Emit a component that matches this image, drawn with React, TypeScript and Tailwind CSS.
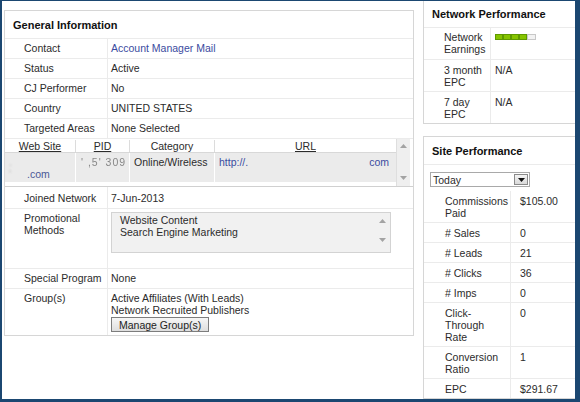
import React from 'react';

const ArrowUp = ({ color = '#a3a3a3' }: { color?: string }) => (
  <svg width="7" height="4" viewBox="0 0 7 4">
    <path d="M0 4 L3.5 0 L7 4 Z" fill={color} />
  </svg>
);

const ArrowDown = ({ color = '#a3a3a3' }: { color?: string }) => (
  <svg width="7" height="4" viewBox="0 0 7 4">
    <path d="M0 0 L7 0 L3.5 4 Z" fill={color} />
  </svg>
);

// simple label/value row of the general information table
const InfoRow = ({ label, children, link }: { label: string; children: React.ReactNode; link?: boolean }) => (
  <div className="flex h-[20px] border-b border-[#ebebeb]">
    <div className="w-[103px] shrink-0 border-r border-[#ebebeb] pl-[19px] pt-[3px]">{label}</div>
    <div className={`pl-[3px] pt-[3px] ${link ? 'text-[#3a4ba0]' : ''}`}>{children}</div>
  </div>
);

const PerfRow = ({ label, value, last }: { label: React.ReactNode; value: React.ReactNode; last?: boolean }) => (
  <div className={`flex ${last ? '' : 'border-b border-[#ebebeb]'}`}>
    <div className="w-[87px] shrink-0 border-r border-[#ebebeb] pl-[21px] pt-[4px] pb-[3px]">{label}</div>
    <div className="pl-[9px] pt-[4px]">{value}</div>
  </div>
);

const EarningsBar = () => (
  <div className="flex mt-[6px] h-[6px]">
    {[0, 1, 2, 3].map((i) => (
      <div key={i} className="w-[8px] h-[6px] bg-[#86c400] border border-[#5f9a00]" />
    ))}
    <div className="w-[9px] h-[6px] bg-[#f2f2f2] border border-[#c8c8c8]" />
  </div>
);

export default function App() {
  return (
    <div className="w-[580px] h-[402px] overflow-hidden bg-white border-[#1b4771] border-t border-l-2 border-r-[5px] border-b-[3px] font-['Liberation_Sans',Arial,sans-serif] text-[10.5px] leading-[12px] text-[#2b2b2b] flex items-start">
      {/* General Information */}
      <div className="ml-[2px] mt-[9px] w-[410px] shrink-0 border border-[#d6d6d6]">
        <div className="h-[28px] border-b border-[#ebebeb] pl-[8px] pt-[8px] text-[11px] font-bold text-[#111]">
          General Information
        </div>
        <InfoRow label="Contact" link>Account Manager Mail</InfoRow>
        <InfoRow label="Status">Active</InfoRow>
        <InfoRow label="CJ Performer">No</InfoRow>
        <InfoRow label="Country">UNITED STATES</InfoRow>
        <InfoRow label="Targeted Areas">None Selected</InfoRow>

        {/* web sites grid */}
        <div className="flex h-[48px] border-b border-[#d0d0d0]">
          <div className="w-[391px] flex flex-col">
            <div className="flex h-[14px] border-b border-[#d8d8d8] text-center pt-px">
              <div className="w-[71px] border-r border-[#dcdcdc] underline">Web Site</div>
              <div className="w-[54px] border-r border-[#dcdcdc] underline">PID</div>
              <div className="w-[85px] border-r border-[#dcdcdc]">Category</div>
              <div className="w-[181px] underline">URL</div>
            </div>
            <div className="flex h-[29px] bg-[#ebebeb]">
              <div className="w-[71px] border-r border-white pl-[4px] pt-[3px]">
                <div className="text-[#bbb] blur-[1px]">.</div>
                <div className="flex">
                  <span className="text-[#bbb] blur-[1px] w-[18px]">'</span>
                  <span className="text-[#4a5796]">.com</span>
                </div>
              </div>
              <div className="w-[54px] border-r border-white pl-[5px] pt-[3px] text-[#888] overflow-hidden whitespace-nowrap tracking-[1px]">
                <span className="blur-[0.7px]">' ,5' 309</span>
              </div>
              <div className="w-[85px] border-r border-white pl-[4px] pt-[3px]">Online/Wireless</div>
              <div className="w-[181px] pl-[4px] pr-[7px] pt-[3px] flex justify-between text-[#3a4ba0]">
                <span>http://.</span>
                <span>com</span>
              </div>
            </div>
          </div>
          <div className="w-[14px] bg-[#efefef] border-l border-[#dedede] flex flex-col justify-between items-center pt-[5px] pb-[6px]">
            <ArrowUp />
            <ArrowDown />
          </div>
        </div>

        <div className="flex h-[22px] border-b border-[#ebebeb]">
          <div className="w-[103px] shrink-0 border-r border-[#ebebeb] pl-[19px] pt-[5px]">Joined Network</div>
          <div className="pl-[3px] pt-[5px]">7-Jun-2013</div>
        </div>

        <div className="flex h-[60px] border-b border-[#ebebeb]">
          <div className="w-[103px] shrink-0 border-r border-[#ebebeb] pl-[19px] pt-[3px]">
            Promotional
            <br />
            Methods
          </div>
          <div className="ml-[3px] mt-[3px] w-[280px] h-[41px] bg-[#f1f1f1] border border-[#d3d3d3] flex">
            <div className="flex-1 pl-[8px] pt-px">
              <div>Website Content</div>
              <div>Search Engine Marketing</div>
            </div>
            <div className="w-[16px] flex flex-col justify-between items-center pt-[6px] pb-[10px]">
              <ArrowUp />
              <ArrowDown />
            </div>
          </div>
        </div>

        <InfoRow label="Special Program">None</InfoRow>

        <div className="flex h-[46px]">
          <div className="w-[103px] shrink-0 border-r border-[#ebebeb] pl-[19px] pt-[3px]">Group(s)</div>
          <div className="pl-[3px] pt-[3px]">
            <div>Active Affiliates (With Leads)</div>
            <div>Network Recruited Publishers</div>
            <button
              type="button"
              className="mt-px h-[15px] whitespace-nowrap border border-[#7d7d7d] bg-gradient-to-b from-[#f6f6f6] to-[#dedede] px-[7px] text-[10.5px] leading-[12px] text-[#222]"
            >
              Manage Group(s)
            </button>
          </div>
        </div>
      </div>

      {/* right column */}
      <div className="ml-[9px] w-[165px] shrink-0 flex flex-col">
        <div className="border-l border-b border-[#d6d6d6]">
          <div className="h-[27px] border-b border-[#ebebeb] pl-[8px] pt-[7px] text-[11px] font-bold text-[#111]">
            Network Performance
          </div>
          <div className="flex border-b border-[#ebebeb]">
            <div className="w-[67px] shrink-0 border-r border-[#ebebeb] pl-[20px] pt-[3px] pb-[4px]">
              Network
              <br />
              Earnings
            </div>
            <div className="pl-[4px]">
              <EarningsBar />
            </div>
          </div>
          <div className="flex border-b border-[#ebebeb]">
            <div className="w-[67px] shrink-0 border-r border-[#ebebeb] pl-[20px] pt-[4px] pb-[3px]">
              3 month
              <br />
              EPC
            </div>
            <div className="pl-[4px] pt-[4px]">N/A</div>
          </div>
          <div className="flex">
            <div className="w-[67px] shrink-0 border-r border-[#ebebeb] pl-[20px] pt-[4px] pb-[3px]">
              7 day
              <br />
              EPC
            </div>
            <div className="pl-[4px] pt-[4px]">N/A</div>
          </div>
        </div>

        <div className="mt-[12px] border-l border-t border-b border-[#d6d6d6]">
          <div className="h-[28px] border-b border-[#ebebeb] pl-[8px] pt-[8px] text-[11px] font-bold text-[#111]">
            Site Performance
          </div>
          <div className="ml-[6px] mt-[7px] mb-[4px] w-[100px] h-[15px] border border-[#a9a9a9] flex items-stretch bg-white">
            <div className="flex-1 pl-[2px] pt-px">Today</div>
            <div className="w-[14px] m-px bg-gradient-to-b from-[#f4f4f4] to-[#d9d9d9] border border-[#8a8a8a] flex items-center justify-center">
              <ArrowDown color="#111" />
            </div>
          </div>
          <PerfRow label={<>Commissions<br />Paid</>} value="$105.00" />
          <PerfRow label="# Sales" value="0" />
          <PerfRow label="# Leads" value="21" />
          <PerfRow label="# Clicks" value="36" />
          <PerfRow label="# Imps" value="0" />
          <PerfRow label={<>Click-<br />Through<br />Rate</>} value="0" />
          <PerfRow label={<>Conversion<br />Ratio</>} value="1" />
          <PerfRow label="EPC" value="$291.67" last />
        </div>
      </div>
    </div>
  );
}
